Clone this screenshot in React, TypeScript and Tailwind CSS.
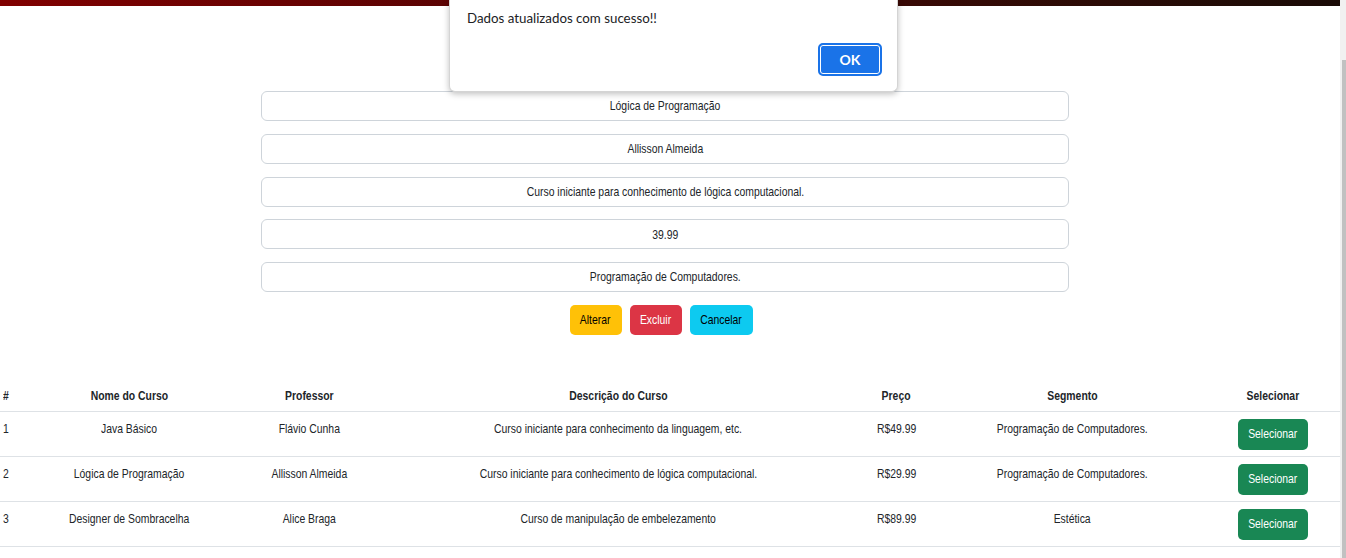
import React from "react";

const rows = [
  { id: 1, nome: "Java Básico", prof: "Flávio Cunha", desc: "Curso iniciante para conhecimento da linguagem, etc.", preco: "R$49.99", seg: "Programação de Computadores." },
  { id: 2, nome: "Lógica de Programação", prof: "Allisson Almeida", desc: "Curso iniciante para conhecimento de lógica computacional.", preco: "R$29.99", seg: "Programação de Computadores." },
  { id: 3, nome: "Designer de Sombracelha", prof: "Alice Braga", desc: "Curso de manipulação de embelezamento", preco: "R$89.99", seg: "Estética" },
];

const fields = [
  "Lógica de Programação",
  "Allisson Almeida",
  "Curso iniciante para conhecimento de lógica computacional.",
  "39.99",
  "Programação de Computadores.",
];

function N({ children, left }: { children: React.ReactNode; left?: boolean }) {
  return (
    <span className={left ? "inline-block origin-left scale-x-[0.8] whitespace-nowrap" : "inline-block scale-x-[0.8] whitespace-nowrap"}>
      {children}
    </span>
  );
}

const headers = ["Nome do Curso", "Professor", "Descrição do Curso", "Preço", "Segmento", "Selecionar"];

export default function App() {
  return (
    <div className="relative flex h-[558px] w-[1346px] overflow-hidden bg-white">
      <div className="flex w-[1340px] flex-col text-[13px] text-[#212529] font-['Liberation_Sans',Arial,sans-serif]">
        <div className="h-[6px] w-full bg-linear-to-r from-[#800000] via-[#4a0303] to-[#1a0b06]" />
        <div className="ml-[261px] mt-[85px] flex w-[808px] flex-col gap-[12.75px]">
          {fields.map((f) => (
            <div
              key={f}
              className="flex h-[30px] w-full items-center justify-center rounded-[6px] border border-[#ced4da] bg-white text-[13px] text-[#212529]"
            >
              <N>{f}</N>
            </div>
          ))}
          <div className="flex justify-center gap-[8px] pr-[8px]">
            <button className="h-[30px] w-[52px] rounded-[5px] bg-[#ffc107] text-[13px] text-black"><N>Alterar</N></button>
            <button className="h-[30px] w-[52px] rounded-[5px] bg-[#dc3545] text-[13px] text-white"><N>Excluir</N></button>
            <button className="h-[30px] w-[63px] rounded-[5px] bg-[#0dcaf0] text-[13px] text-black"><N>Cancelar</N></button>
          </div>
        </div>
        <table className="mt-[44px] w-full table-fixed border-collapse">
          <colgroup>
            <col className="w-[22px]" />
            <col className="w-[215px]" />
            <col className="w-[145px]" />
            <col className="w-[472px]" />
            <col className="w-[85px]" />
            <col className="w-[266px]" />
            <col className="w-[135px]" />
          </colgroup>
          <thead>
            <tr className="border-b border-[#dee2e6]">
              <th className="pb-[6px] pl-[3px] pt-[8px] text-left font-bold leading-[18px]"><N left>#</N></th>
              {headers.map((h) => (
                <th key={h} className="pb-[6px] pt-[8px] text-center font-bold leading-[18px]"><N>{h}</N></th>
              ))}
            </tr>
          </thead>
          <tbody>
            {rows.map((r) => (
              <tr key={r.id} className="border-b border-[#dee2e6]">
                <td className="pb-[5px] pl-[3px] pt-[8px] align-top leading-[18px]"><N left>{r.id}</N></td>
                <td className="pb-[5px] pt-[8px] text-center align-top leading-[18px]"><N>{r.nome}</N></td>
                <td className="pb-[5px] pt-[8px] text-center align-top leading-[18px]"><N>{r.prof}</N></td>
                <td className="pb-[5px] pt-[8px] text-center align-top leading-[18px]"><N>{r.desc}</N></td>
                <td className="pb-[5px] pt-[8px] text-center align-top leading-[18px]"><N>{r.preco}</N></td>
                <td className="pb-[5px] pt-[8px] text-center align-top leading-[18px]"><N>{r.seg}</N></td>
                <td className="pb-[6px] pt-[7px] text-center align-top leading-[18px]">
                  <button className="h-[31px] w-[70px] rounded-[5px] bg-[#198754] text-[13px] text-white"><N>Selecionar</N></button>
                </td>
              </tr>
            ))}
          </tbody>
        </table>
      </div>
      <div className="flex w-[6px] flex-col bg-[#f1f1f1]">
        <div className="h-[60px]" />
        <div className="ml-[2px] flex-1 bg-[#c1c1c1]" />
      </div>
      <div className="absolute left-[449px] top-0 flex h-[92px] w-[449px] flex-col rounded-b-[6px] border border-t-0 border-[#d4d4d4] bg-white shadow-[0_2px_6px_rgba(0,0,0,0.25)] font-['Lato',sans-serif]">
        <p className="pl-[17px] pt-[8px] text-[13.3px] leading-[20px] text-[#202124]">Dados atualizados com sucesso!!</p>
        <div className="mt-[15px] flex justify-end pr-[15px]">
          <button className="h-[33px] w-[64px] rounded-[5px] border-2 border-[#1a73e8] bg-[#1a73e8] text-[14px] font-bold text-white shadow-[inset_0_0_0_1px_#ffffff]">OK</button>
        </div>
      </div>
    </div>
  );
}
